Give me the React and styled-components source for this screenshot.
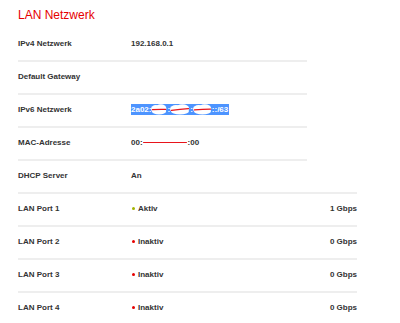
import React from "react";
import styled, { createGlobalStyle } from "styled-components";

const GlobalStyle = createGlobalStyle`
  body {
    margin: 0;
    background: #ffffff;
    font-family: "Liberation Sans", Arial, sans-serif;
  }
`;

const general = [
  { label: "IPv4 Netzwerk", value: "192.168.0.1" },
  { label: "Default Gateway", value: "" },
  { label: "IPv6 Netzwerk", value: "ipv6" },
  { label: "MAC-Adresse", value: "mac" },
];

const ports = [
  { label: "DHCP Server", value: "An" },
  { label: "LAN Port 1", status: "Aktiv", speed: "1 Gbps", on: true },
  { label: "LAN Port 2", status: "Inaktiv", speed: "0 Gbps" },
  { label: "LAN Port 3", status: "Inaktiv", speed: "0 Gbps" },
  { label: "LAN Port 4", status: "Inaktiv", speed: "0 Gbps" },
];

const Blob = ({ width, tilt }) => (
  <BlobSvg width={width} height="11" viewBox={`0 0 ${width} 11`}>
    <ellipse cx={width * 0.3} cy="5" rx={width * 0.3} ry="4" fill="#fff" />
    <ellipse cx={width * 0.62} cy="4.5" rx={width * 0.34} ry="4.2" fill="#fff" />
    <ellipse cx={width * 0.5} cy="7" rx={width * 0.45} ry="3.6" fill="#fff" />
    <path
      d={`M1.5 ${5.6 + tilt} Q${width / 2} ${5.2} ${width - 1.5} ${5.4 - tilt}`}
      stroke="#e8141b"
      strokeWidth="1.4"
      fill="none"
      strokeLinecap="round"
    />
  </BlobSvg>
);

const renderValue = (value) => {
  if (value === "ipv6") {
    return (
      <Selected>
        2a02:
        <Blob width={16} tilt={0} />:
        <Blob width={20} tilt={0.8} />:
        <Blob width={19} tilt={0.3} />
        ::/63
      </Selected>
    );
  }
  if (value === "mac") {
    return (
      <span>
        00:
        <Strike />
        :00
      </span>
    );
  }
  return value;
};

const App = () => {
  return (
    <>
      <GlobalStyle />
      <Page>
        <Title>LAN Netzwerk</Title>
        <Table $width={289}>
          {general.map((row) => (
            <Row key={row.label}>
              <Label>{row.label}</Label>
              <Value>{renderValue(row.value)}</Value>
            </Row>
          ))}
        </Table>
        <Table $width={339}>
          {ports.map((row) => (
            <Row key={row.label}>
              <Label>{row.label}</Label>
              <Value>
                {row.status ? (
                  <>
                    <Dot $on={row.on} />
                    {row.status}
                  </>
                ) : (
                  row.value
                )}
              </Value>
              <Speed>{row.speed}</Speed>
            </Row>
          ))}
        </Table>
      </Page>
    </>
  );
};

export default App;

const Page = styled.div`
  padding: 8px 0 0 18px;
`;

const Title = styled.h1`
  margin: 0 0 7px;
  font-size: 12px;
  line-height: 14px;
  font-weight: normal;
  color: #e60000;
`;

const Table = styled.div`
  width: ${(p) => p.$width}px;
`;

const Row = styled.div`
  display: grid;
  grid-template-columns: 113px 1fr auto;
  align-items: center;
  padding: 9px 0 11px;
  border-bottom: 2px solid #eeeeee;
  font-size: 8px;
  line-height: 11px;
  font-weight: bold;
  color: #333333;
`;

const Label = styled.div`
  white-space: nowrap;
`;

const Value = styled.div`
  display: flex;
  align-items: center;
  white-space: nowrap;
  min-height: 11px;
`;

const Speed = styled.div`
  text-align: right;
  white-space: nowrap;
`;

const Selected = styled.span`
  display: inline-flex;
  align-items: center;
  height: 11px;
  padding-right: 1px;
  background: #4d94ff;
  color: #ffffff;
`;

const BlobSvg = styled.svg`
  display: block;
  overflow: visible;
`;

const Strike = styled.span`
  display: inline-block;
  width: 44px;
  height: 1.5px;
  margin: 0 1px 1px 0;
  vertical-align: middle;
  border-radius: 1px;
  background: #e8141b;
`;

const Dot = styled.span`
  display: inline-block;
  width: 3px;
  height: 3px;
  margin: 0 3px 0 1px;
  border-radius: 50%;
  background: ${(p) => (p.$on ? "#a3b300" : "#e60000")};
`;
